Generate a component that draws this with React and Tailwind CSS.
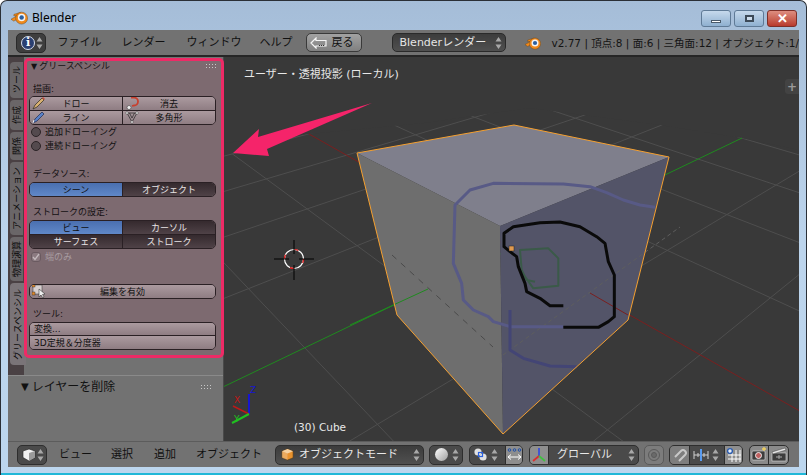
import React from "react";

const FONT = { fontFamily: '"DejaVu Sans","Noto Sans CJK JP",sans-serif' };

function UpDown({ className = "" }) {
  return (
    <svg width="7" height="14" viewBox="0 0 7 14" className={className}>
      <path d="M3.5 1 L6.5 5.5 H0.5Z M3.5 13 L6.5 8.5 H0.5Z" fill="#a8a8a8" />
    </svg>
  );
}

function BlenderLogo({ size = 16 }) {
  return (
    <svg width={size} height={size} viewBox="0 0 16 16">
      <path d="M0 9.6 L5.4 6.6 L2.6 6.3 L2.8 5 L9 3.2 L9 8 L2.6 11.4 L1.4 10.6Z" fill="#f08a1d" stroke="#6a4010" strokeWidth="0.4" />
      <circle cx="10" cy="8.6" r="5.6" fill="#f08a1d" stroke="#6a4010" strokeWidth="0.4" />
      <circle cx="10" cy="8" r="3.5" fill="#f5f5f5" />
      <circle cx="10" cy="8" r="2.1" fill="#2c5f9e" />
    </svg>
  );
}

function WinButton({ children, className }) {
  return (
    <div className={`w-[30px] h-[17px] rounded-[3px] border border-[#5f7a96] flex items-center justify-center ${className}`}>
      {children}
    </div>
  );
}

function TitleBar() {
  return (
    <div className="h-[29px] flex items-start pl-[10px] pr-[9px] bg-transparent">
      <div className="mt-[8px]"><BlenderLogo size={17} /></div>
      <span className="ml-[4px] mt-[9px] text-[12px] leading-[16px] text-black" style={{ fontFamily: '"Noto Sans",sans-serif' }}>Blender</span>
      <div className="ml-auto mt-[9px] flex gap-[3px]">
        <WinButton className="bg-gradient-to-b from-[#c6d9ec] to-[#8fb0d0]">
          <div className="w-[10px] h-[3px] mt-[5px] bg-white border border-[#4a5a6a]" />
        </WinButton>
        <WinButton className="bg-gradient-to-b from-[#c6d9ec] to-[#8fb0d0]">
          <div className="w-[9px] h-[7px] bg-white/40 border-2 border-[#3d4a58]" />
        </WinButton>
        <WinButton className="bg-gradient-to-b from-[#dd8d80] to-[#b8392c] border-[#7d2f28]">
          <span className="text-white font-bold text-[13px] leading-none" style={{ fontFamily: '"Liberation Sans",sans-serif' }}>✕</span>
        </WinButton>
      </div>
    </div>
  );
}

function Menu({ children, className = "" }) {
  return <span className={`text-[11px] leading-[14px] text-[#101010] whitespace-nowrap ${className}`}>{children}</span>;
}

function TopHeader() {
  return (
    <div className="h-[27px] bg-[#727272] border-b-2 border-[#262626] flex items-center overflow-hidden shrink-0">
      <div className="ml-[8px] w-[30px] h-[20px] rounded-[5px] bg-[#3e3e3e] border border-[#2a2a2a] flex items-center pl-[4px] gap-[1px]">
        <div className="w-[14px] h-[14px] rounded-full bg-[#2a3f70] border border-[#d8dfee] flex items-center justify-center text-white text-[11px] font-bold leading-none" style={{ fontFamily: '"DejaVu Serif",serif' }}>i</div>
        <UpDown />
      </div>
      <Menu className="ml-[12px]">ファイル</Menu>
      <Menu className="ml-[20px]">レンダー</Menu>
      <Menu className="ml-[21px]">ウィンドウ</Menu>
      <Menu className="ml-[18px]">ヘルプ</Menu>
      <div className="ml-[13px] w-[57px] h-[19px] rounded-[5px] border border-[#3a3a3a] bg-gradient-to-b from-[#a2a2a2] to-[#808080] flex items-center pl-[3px] gap-[5px]">
        <svg width="17" height="12" viewBox="0 0 17 12">
          <path d="M1 6 L6 1 V3.5 H16 V9 H6 V11Z" fill="none" stroke="#f5f5f5" strokeWidth="1.2" />
          <path d="M9 8.5 H14" stroke="#333" strokeDasharray="1 1" />
        </svg>
        <span className="text-[11px] leading-[14px] text-[#111]">戻る</span>
      </div>
      <div className="ml-[30px] w-[117px] h-[19px] rounded-[5px] border border-[#2a2a2a] bg-gradient-to-b from-[#3c3c3c] to-[#505050] flex items-center pl-[7px] pr-[3px]">
        <span className="text-[11px] leading-[14px] text-[#e6e6e6] whitespace-nowrap">Blenderレンダー</span>
        <UpDown className="ml-auto" />
      </div>
      <div className="ml-[19px] shrink-0"><BlenderLogo size={16} /></div>
      <span className="ml-[10px] text-[10.5px] leading-[14px] text-[#141414] whitespace-nowrap">v2.77 | 頂点:8 | 面:6 | 三角面:12 | オブジェクト:1/</span>
    </div>
  );
}

function Tab({ label, h, active }) {
  return (
    <div
      className={`ml-[2px] shrink-0 rounded-l-[4px] flex items-center justify-center overflow-hidden ${active ? "bg-[#7a7478] w-[16px]" : "bg-[#6a6668] w-[13px]"}`}
      style={{ height: h }}
    >
      <span className="rotate-180 text-[9px] leading-[12px] text-[#0c0c0c] whitespace-nowrap [writing-mode:vertical-rl] [text-orientation:sideways]">{label}</span>
    </div>
  );
}

function Tabs() {
  return (
    <div className="w-[16px] bg-[#4a4144] flex flex-col pt-[5px] gap-[2px] shrink-0 h-[318px]">
      <Tab label="ツール" h={36} />
      <Tab label="作成" h={30} />
      <Tab label="関係" h={28} />
      <Tab label="アニメーション" h={73} />
      <Tab label="物理演算" h={44} />
      <Tab label="グリースペンシル" h={82} active />
    </div>
  );
}

const lightBtn = "bg-gradient-to-b from-[#ab9a9f] to-[#8f7d83] text-[#111]";
const darkBtn = "bg-gradient-to-b from-[#352a2e] to-[#4f4247] text-[#e8e4e5]";
const blueBtn = "bg-gradient-to-b from-[#4a6fb0] to-[#6088c8] text-[#0e0e0e]";

function Label({ children, className = "" }) {
  return <div className={`text-[9px] leading-[12px] text-[#141012] whitespace-nowrap ${className}`}>{children}</div>;
}

function Cell({ tone, children, icon, className = "" }) {
  return (
    <div className={`relative h-[13px] flex-1 flex items-center justify-center text-[9px] leading-[12px] whitespace-nowrap ${tone} ${className}`}>
      {icon && <span className="absolute left-[2px] top-[-1px]">{icon}</span>}
      {children}
    </div>
  );
}

function BtnRow({ children, className = "" }) {
  return <div className={`flex divide-x divide-[#2a2024] ${className}`}>{children}</div>;
}

const Pencil = (
  <svg width="14" height="14" viewBox="0 0 14 14">
    <path d="M1 13 L3 9 L10 2 L12 4 L5 11Z" fill="#d8b070" stroke="#2d2a20" strokeWidth="0.7" />
    <path d="M10 2 L12 4 L13 3 L11 1Z" fill="#c84a3a" />
  </svg>
);
const BluePencil = (
  <svg width="14" height="14" viewBox="0 0 14 14">
    <path d="M1 13 L3 9 L10 2 L12 4 L5 11Z" fill="#5a82c8" stroke="#1d2a50" strokeWidth="0.7" />
    <path d="M1 13 L2 10" stroke="#eee" />
  </svg>
);
const Eraser = (
  <svg width="14" height="14" viewBox="0 0 14 14">
    <path d="M6 1.5 H9 A4 4 0 0 1 9 9.5 L7 10" fill="none" stroke="#c8402e" strokeWidth="1.8" />
    <circle cx="4" cy="11.5" r="2" fill="#eeeeee" stroke="#333" strokeWidth="0.5" />
  </svg>
);
const Poly = (
  <svg width="14" height="14" viewBox="0 0 14 14">
    <path d="M2 3 H12 L7 12Z M4.5 3 L7 8 L9.5 3" fill="none" stroke="#222" strokeWidth="0.7" />
    <circle cx="2" cy="3" r="1.3" fill="#eee" stroke="#222" strokeWidth="0.4" />
    <circle cx="12" cy="3" r="1.3" fill="#eee" stroke="#222" strokeWidth="0.4" />
    <circle cx="7" cy="12" r="1.3" fill="#eee" stroke="#222" strokeWidth="0.4" />
  </svg>
);
const EditIcon = (
  <svg width="14" height="14" viewBox="0 0 14 14">
    <rect x="1" y="1" width="9" height="9" fill="#d8d0d0" stroke="#333" strokeWidth="0.5" />
    <rect x="0" y="0" width="3" height="3" fill="#e08a2e" stroke="#222" strokeWidth="0.4" />
    <rect x="0" y="8" width="3" height="3" fill="#e08a2e" stroke="#222" strokeWidth="0.4" />
    <path d="M7 5 V13 L9 11 L11 14 L12 13 L10.5 10.5 L13 10Z" fill="#eee" stroke="#222" strokeWidth="0.5" />
  </svg>
);

function Radio({ label }) {
  return (
    <div className="flex items-center h-[14px] pl-[4px]">
      <div className="w-[10px] h-[10px] rounded-full bg-[#544a4e] border border-[#2b2326]" />
      <span className="ml-[4px] text-[9px] leading-[12px] text-[#111] whitespace-nowrap">{label}</span>
    </div>
  );
}

function Grip() {
  return (
    <svg width="11" height="5" viewBox="0 0 11 5">
      {[0, 3, 6, 9].map((x) => [0, 3].map((y) => <rect key={`${x}-${y}`} x={x} y={y} width="1" height="1" fill="#c8c8c8" />))}
    </svg>
  );
}

function GreasePanel() {
  return (
    <div className="w-[200px] h-[300px] mt-[1px] border-[3px] border-[#ee2a66] rounded-[5px] bg-[#7d6a70] shrink-0 overflow-hidden">
      <div className="flex items-center h-[11px] pl-[4px] pr-[4px]">
        <span className="text-[8px] leading-[11px] text-[#151113]">▼</span>
        <span className="ml-[2px] text-[9px] leading-[11px] text-[#151113]">グリースペンシル</span>
        <span className="ml-auto"><Grip /></span>
      </div>
      <Label className="mt-[11px] pl-[6px]">描画:</Label>
      <div className="ml-[2px] mt-[1px] w-[187px] rounded-[5px] border border-[#2a2024] overflow-hidden">
        <BtnRow className="border-b border-[#2a2024]">
          <Cell tone={lightBtn} icon={Pencil}>ドロー</Cell>
          <Cell tone={lightBtn} icon={Eraser}>消去</Cell>
        </BtnRow>
        <BtnRow>
          <Cell tone={lightBtn} icon={BluePencil}>ライン</Cell>
          <Cell tone={lightBtn} icon={Poly}>多角形</Cell>
        </BtnRow>
      </div>
      <Radio label="追加ドローイング" />
      <Radio label="連続ドローイング" />
      <Label className="mt-[15px] pl-[6px]">データソース:</Label>
      <div className="ml-[2px] mt-[2px] w-[187px] rounded-[5px] border border-[#2a2024] overflow-hidden">
        <BtnRow>
          <Cell tone={blueBtn}>シーン</Cell>
          <Cell tone={darkBtn}>オブジェクト</Cell>
        </BtnRow>
      </div>
      <Label className="mt-[9px] pl-[6px]">ストロークの設定:</Label>
      <div className="ml-[2px] mt-[2px] w-[187px] rounded-[5px] border border-[#2a2024] overflow-hidden">
        <BtnRow className="border-b border-[#2a2024]">
          <Cell tone={blueBtn}>ビュー</Cell>
          <Cell tone={darkBtn}>カーソル</Cell>
        </BtnRow>
        <BtnRow>
          <Cell tone={darkBtn}>サーフェス</Cell>
          <Cell tone={darkBtn}>ストローク</Cell>
        </BtnRow>
      </div>
      <div className="flex items-center h-[14px] mt-[1px] pl-[4px]">
        <div className="w-[10px] h-[10px] rounded-[3px] bg-[#8b7a80] border border-[#6a5a60] flex items-center justify-center">
          <svg width="8" height="8" viewBox="0 0 8 8"><path d="M1 4 L3 6.5 L7 1" fill="none" stroke="#c4babd" strokeWidth="1.3" /></svg>
        </div>
        <span className="ml-[4px] text-[9px] leading-[12px] text-[#a89ca0]">端のみ</span>
      </div>
      <div className="ml-[2px] mt-[20px] w-[187px] rounded-[5px] border border-[#2a2024] overflow-hidden">
        <Cell tone={lightBtn} icon={EditIcon}>編集を有効</Cell>
      </div>
      <Label className="mt-[9px] pl-[6px]">ツール:</Label>
      <div className="ml-[2px] mt-[2px] w-[187px] rounded-[5px] border border-[#2a2024] overflow-hidden">
        <div className={`h-[13px] border-b border-[#2a2024] pl-[4px] flex items-center text-[9px] leading-[12px] ${lightBtn}`}>変換...</div>
        <div className={`h-[13px] pl-[4px] flex items-center text-[9px] leading-[12px] ${lightBtn}`}>3D定規＆分度器</div>
      </div>
    </div>
  );
}

function Sidebar() {
  return (
    <div className="w-[216px] bg-[#727272] border-r border-[#4a4a4a] flex flex-col shrink-0">
      <div className="flex h-[318px] shrink-0">
        <Tabs />
        <GreasePanel />
      </div>
      <div className="flex-1 border-t border-[#8a8a8a] flex items-start pl-[13px] pr-[11px] pt-[3px]">
        <span className="text-[10px] leading-[16px] text-[#111]">▼</span>
        <span className="ml-[3px] text-[12px] leading-[16px] text-[#111]">レイヤーを削除</span>
        <span className="ml-auto mt-[6px]"><Grip /></span>
      </div>
    </div>
  );
}

/* perspective projection of the floor grid */
const project = (x, y) => {
  const g = -0.45, h = 0.42;
  const d = 1 + g * x + h * y;
  const ax = 63, ay = 54, bx = 542, by = -52;
  return [(511 + ax * x + bx * y) / d, (248 + ay * x + by * y) / d];
};
const gridLines = [];
for (let i = -4; i <= 4; i++) {
  if (i === 0) continue;
  const t = i / 4;
  gridLines.push([project(t, -0.95), project(t, 1)]);
  gridLines.push([project(-1, t), project(0.95, t)]);
}
const zp = (s) =>
  s.map(([x, y]) => `${350 + x / 3},${120 + y / 3}`).join(" ");

const black = zp([[640,557],[600,557],[570,535],[530,515],[525,490],[505,440],[500,410],[480,395],[462,380],[462,340],[490,320],[570,308],[630,306],[690,320],[740,350],[765,370],[775,425],[793,465],[793,590],[775,605],[745,622],[640,622]]);
const blue1 = zp([[915,262],[870,255],[820,240],[770,218],[720,200],[640,192],[430,190],[360,210],[315,255],[310,430],[335,490],[340,540],[370,570],[415,590],[430,605],[480,620],[640,620]]);
const blue2 = zp([[480,570],[480,690],[520,715],[600,738],[680,740]]);
const green = zp([[555,485],[530,480],[515,450],[510,390],[595,385],[625,415],[625,497],[550,505],[525,470]]);

function Viewport() {
  return (
    <div className="flex-1 relative bg-[#393939] overflow-hidden">
      <svg className="absolute inset-0" width="575" height="384" viewBox="224 57 575 384">
        {gridLines.map(([a, b], i) => (
          <line key={i} x1={a[0]} y1={a[1]} x2={b[0]} y2={b[1]} stroke="#4e4e4e" strokeWidth="1" />
        ))}
        <polygon points="224,57 799,57 799,150 742,138 660,125 530,108 424,123 309,134 224,143" fill="#393939" />
        <line x1="309" y1="134" x2="860" y2="445" stroke="#7a1f1f" strokeWidth="1" />
        <line x1="742" y1="138" x2="200" y2="398" stroke="#1f8a1f" strokeWidth="1" />
        <polygon points="514,125 669,157 500,226 357,153" fill="#7f7f8c" />
        <polygon points="357,153 500,226 503,434 397,315" fill="#6e6e6e" />
        <polygon points="500,226 669,157 628,320 503,434" fill="#535468" />
        <line x1="392" y1="255" x2="493" y2="347" stroke="#4a4a4a" strokeDasharray="6 6" />
        <line x1="503" y1="355" x2="680" y2="227" stroke="#5e5e5e" strokeDasharray="4 3" />
        <line x1="590" y1="293" x2="628" y2="315" stroke="#7a1f1f" />
        <line x1="350" y1="325" x2="428" y2="289" stroke="#1f8a1f" />
        <polyline points={blue1} fill="none" stroke="#585a86" strokeWidth="3" strokeLinejoin="round" />
        <polyline points={blue2} fill="none" stroke="#434575" strokeWidth="3" strokeLinejoin="round" />
        <polyline points={green} fill="none" stroke="#3a5a48" strokeWidth="2" strokeLinejoin="round" />
        <polyline points={black} fill="none" stroke="#0a0a0a" strokeWidth="3" strokeLinejoin="round" />
        <polygon points="514,125 669,157 628,320 503,434 397,315 357,153" fill="none" stroke="#f5a030" strokeWidth="1" />
        <rect x="509" y="246" width="5" height="5" fill="#e09a50" stroke="#222" strokeWidth="0.5" />
        {/* 3D cursor */}
        <circle cx="294" cy="259" r="9.5" fill="none" stroke="#ffffff" strokeWidth="1.2" />
        <circle cx="294" cy="259" r="9.5" fill="none" stroke="#e01010" strokeWidth="1.2" strokeDasharray="4 11" />
        <path d="M274 259 H289 M299 259 H314 M294 240 V254 M294 265 V280" stroke="#000" strokeWidth="1" />
        {/* axis widget */}
        <path d="M249 414 V394" stroke="#1616d0" strokeWidth="2" />
        <path d="M249 414 L233 406" stroke="#c01818" strokeWidth="1.5" />
        <path d="M249 414 L232 423" stroke="#20c020" strokeWidth="2" />
      </svg>
      <span className="absolute left-[20px] top-[11px] text-[11px] leading-[14px] text-[#e8e8e8] whitespace-nowrap">ユーザー・透視投影 (ローカル)</span>
      <span className="absolute left-[10px] top-[339px] text-[9px] leading-[9px] text-[#c01818]">X</span>
      <span className="absolute left-[10px] top-[358px] text-[9px] leading-[9px] text-[#20c020]">Y</span>
      <span className="absolute left-[26px] top-[329px] text-[9px] leading-[9px] text-[#1616d0]">Z</span>
      <span className="absolute left-[70px] top-[363px] text-[10.5px] leading-[14px] text-[#e8e8e8] whitespace-nowrap">(30) Cube</span>
      <div className="absolute right-0 top-[22px] w-[14px] h-[15px] rounded-l-[3px] bg-[#434343] flex items-center justify-center text-[#9a9a9a] font-bold text-[12px] leading-none">+</div>
      <svg className="absolute left-[9px] top-[44px]" width="142" height="56" viewBox="233 101 142 56">
        <polygon points="233,153 259,129 258,137 372,103 267,149 269,156" fill="#f5246a" />
      </svg>
    </div>
  );
}

function IconBox({ className = "", children }) {
  return (
    <div className={`h-[20px] rounded-[5px] border border-[#2e2e2e] flex items-center overflow-hidden shrink-0 ${className}`}>{children}</div>
  );
}

const CubeIcon = ({ size = 13 }) => (
  <svg width={size} height={size} viewBox="0 0 14 14">
    <path d="M7 1 L13 3.5 V10.5 L7 13 L1 10.5 V3.5Z" fill="#e8922e" stroke="#5a3a10" strokeWidth="0.6" />
    <path d="M1 3.5 L7 6 L13 3.5 L7 1Z" fill="#f5d0a0" />
    <path d="M7 6 V13 L1 10.5 V3.5Z" fill="#f3f3f3" fillOpacity="0.25" />
  </svg>
);

function BottomBar() {
  return (
    <div className="h-[26px] bg-[#727272] border-t border-[#5c5c5c] flex items-center overflow-hidden shrink-0">
      <IconBox className="ml-[9px] w-[30px] bg-[#4a4a4a] pl-[4px] gap-[1px]">
        <svg width="14" height="14" viewBox="0 0 14 14">
          <path d="M7 1 L13 3 V9.5 L7 13 L1 9.5 V3Z" fill="#f0f0f0" stroke="#222" strokeWidth="0.6" />
          <path d="M7 5 L13 3 V9.5 L7 13Z" fill="#9a9a9a" />
        </svg>
        <UpDown />
      </IconBox>
      <Menu className="ml-[12px]">ビュー</Menu>
      <Menu className="ml-[19px]">選択</Menu>
      <Menu className="ml-[21px]">追加</Menu>
      <Menu className="ml-[20px]">オブジェクト</Menu>
      <IconBox className="ml-[13px] w-[149px] bg-gradient-to-b from-[#3c3c3c] to-[#505050] pl-[5px] pr-[3px]">
        <CubeIcon />
        <span className="ml-[5px] text-[11px] leading-[14px] text-[#e8e8e8] whitespace-nowrap">オブジェクトモード</span>
        <UpDown className="ml-auto" />
      </IconBox>
      <IconBox className="ml-[5px] w-[34px] bg-[#4a4a4a] pl-[5px] gap-[4px]">
        <div className="w-[13px] h-[13px] shrink-0 rounded-full bg-gradient-to-br from-white to-[#a0a0a0]" />
        <UpDown />
      </IconBox>
      <IconBox className="ml-[6px] w-[54px] bg-[#4a4a4a]">
        <div className="w-[35px] h-full flex items-center pl-[3px] gap-[3px] shrink-0">
          <svg width="15" height="15" viewBox="0 0 15 15">
            <circle cx="5" cy="5" r="3.6" fill="#e0e0e0" />
            <circle cx="10" cy="10" r="3.6" fill="#e0e0e0" />
            <rect x="5.5" y="5.5" width="4" height="4" fill="none" stroke="#2860e0" strokeWidth="1.2" />
          </svg>
          <UpDown />
        </div>
        <div className="flex-1 h-full bg-[#8e8e8e] border-l border-[#2e2e2e] flex items-center justify-center">
          <svg width="15" height="15" viewBox="0 0 15 15">
            <circle cx="2.5" cy="3" r="1.3" fill="none" stroke="#1f4fa8" />
            <circle cx="7.5" cy="3" r="1.3" fill="none" stroke="#1f4fa8" />
            <circle cx="12.5" cy="3" r="1.3" fill="none" stroke="#1f4fa8" />
            <path d="M1 10 H14 M1 10 L4 7.5 M1 10 L4 12.5 M14 10 L11 7.5 M14 10 L11 12.5" stroke="#fff" strokeWidth="1" fill="none" />
          </svg>
        </div>
      </IconBox>
      <IconBox className="ml-[6px] w-[110px] bg-[#4a4a4a]">
        <div className="w-[19px] h-full bg-[#8e8e8e] border-r border-[#2e2e2e] flex items-center justify-center shrink-0">
          <svg width="16" height="16" viewBox="0 0 16 16">
            <path d="M8 9 V1" stroke="#3a50d8" strokeWidth="1.8" />
            <path d="M8 9 L2 14" stroke="#d83030" strokeWidth="1.8" />
            <path d="M8 9 L14 14" stroke="#40c040" strokeWidth="1.8" />
          </svg>
        </div>
        <span className="ml-[8px] text-[11px] leading-[14px] text-[#e8e8e8] whitespace-nowrap">グローバル</span>
        <UpDown className="ml-auto mr-[3px]" />
      </IconBox>
      <IconBox className="ml-[5px] w-[20px] bg-[#7c7c7c] border-[#5a5a5a] justify-center">
        <svg width="14" height="14" viewBox="0 0 14 14">
          <circle cx="7" cy="7" r="5.5" fill="none" stroke="#5a5a5a" />
          <circle cx="7" cy="7" r="2.5" fill="#6a6a6a" stroke="#5a5a5a" />
        </svg>
      </IconBox>
      <IconBox className="ml-[5px] w-[74px] bg-[#4a4a4a]">
        <div className="w-[20px] h-full bg-[#7e7e7e] border-r border-[#2e2e2e] flex items-center justify-center shrink-0">
          <svg width="14" height="14" viewBox="0 0 14 14">
            <path d="M2 9 L8 3 A2.8 2.8 0 0 1 12 7 L6 13" fill="none" stroke="#c8c8c8" strokeWidth="2" />
          </svg>
        </div>
        <div className="w-[34px] h-full flex items-center pl-[3px] gap-[3px] shrink-0">
          <svg width="16" height="14" viewBox="0 0 16 14">
            <path d="M1 3 V11 M15 3 V11 M5 5 V9 M11 5 V9 M1 7 H15" stroke="#d0d0d0" />
            <rect x="7" y="1" width="2" height="12" fill="#5a9cf0" />
          </svg>
          <UpDown />
        </div>
        <div className="flex-1 h-full bg-[#8e8e8e] border-l border-[#2e2e2e] flex items-center justify-center">
          <svg width="16" height="16" viewBox="0 0 16 16">
            <path d="M2 8 H15 M2 12 H15 M6 5 V15 M10 3 V15 M14 3 V15" stroke="#fff" strokeWidth="1" />
            <circle cx="4" cy="4" r="2.4" fill="#e8eef8" stroke="#2b5cb0" strokeWidth="1.4" />
          </svg>
        </div>
      </IconBox>
      <IconBox className="ml-[6px] w-[40px] bg-[#8a8a8a]">
        <div className="w-[19px] h-full border-r border-[#2e2e2e] flex items-center justify-center shrink-0">
          <svg width="16" height="15" viewBox="0 0 16 15">
            <rect x="1" y="4" width="13" height="9" rx="1" fill="#3c3c3c" stroke="#ddd" strokeWidth="0.6" />
            <circle cx="7.5" cy="8.5" r="3" fill="#c06060" stroke="#eee" />
            <path d="M13 0 V4 M11 2 H15" stroke="#f0d060" strokeWidth="1.3" />
          </svg>
        </div>
        <div className="flex-1 h-full flex items-center justify-center">
          <svg width="16" height="15" viewBox="0 0 16 15">
            <rect x="1" y="6" width="14" height="8" fill="#3c3c3c" stroke="#ddd" strokeWidth="0.6" />
            <path d="M1 5 L14 1 L15 3 L2 7Z" fill="#e8e8e8" stroke="#222" strokeWidth="0.4" />
            <path d="M5 10 H11 M8 8 V12" stroke="#aaa" />
          </svg>
        </div>
      </IconBox>
    </div>
  );
}

export default function App() {
  return (
    <div className="w-[807px] h-[475px] relative overflow-hidden rounded-t-[7px] border border-b-0 border-[#2a2f36] bg-gradient-to-b from-[#a5bdd8] via-[#bcd4ec] to-[#bcd6ee]" style={FONT}>
      <TitleBar />
      <div className="mx-[7px] flex flex-col h-[437px]">
        <TopHeader />
        <div className="flex flex-1 min-h-0 overflow-hidden">
          <Sidebar />
          <Viewport />
        </div>
        <BottomBar />
      </div>
      <div className="absolute left-0 right-0 bottom-0 h-[2px] bg-[#20b8d8]" />
    </div>
  );
}
